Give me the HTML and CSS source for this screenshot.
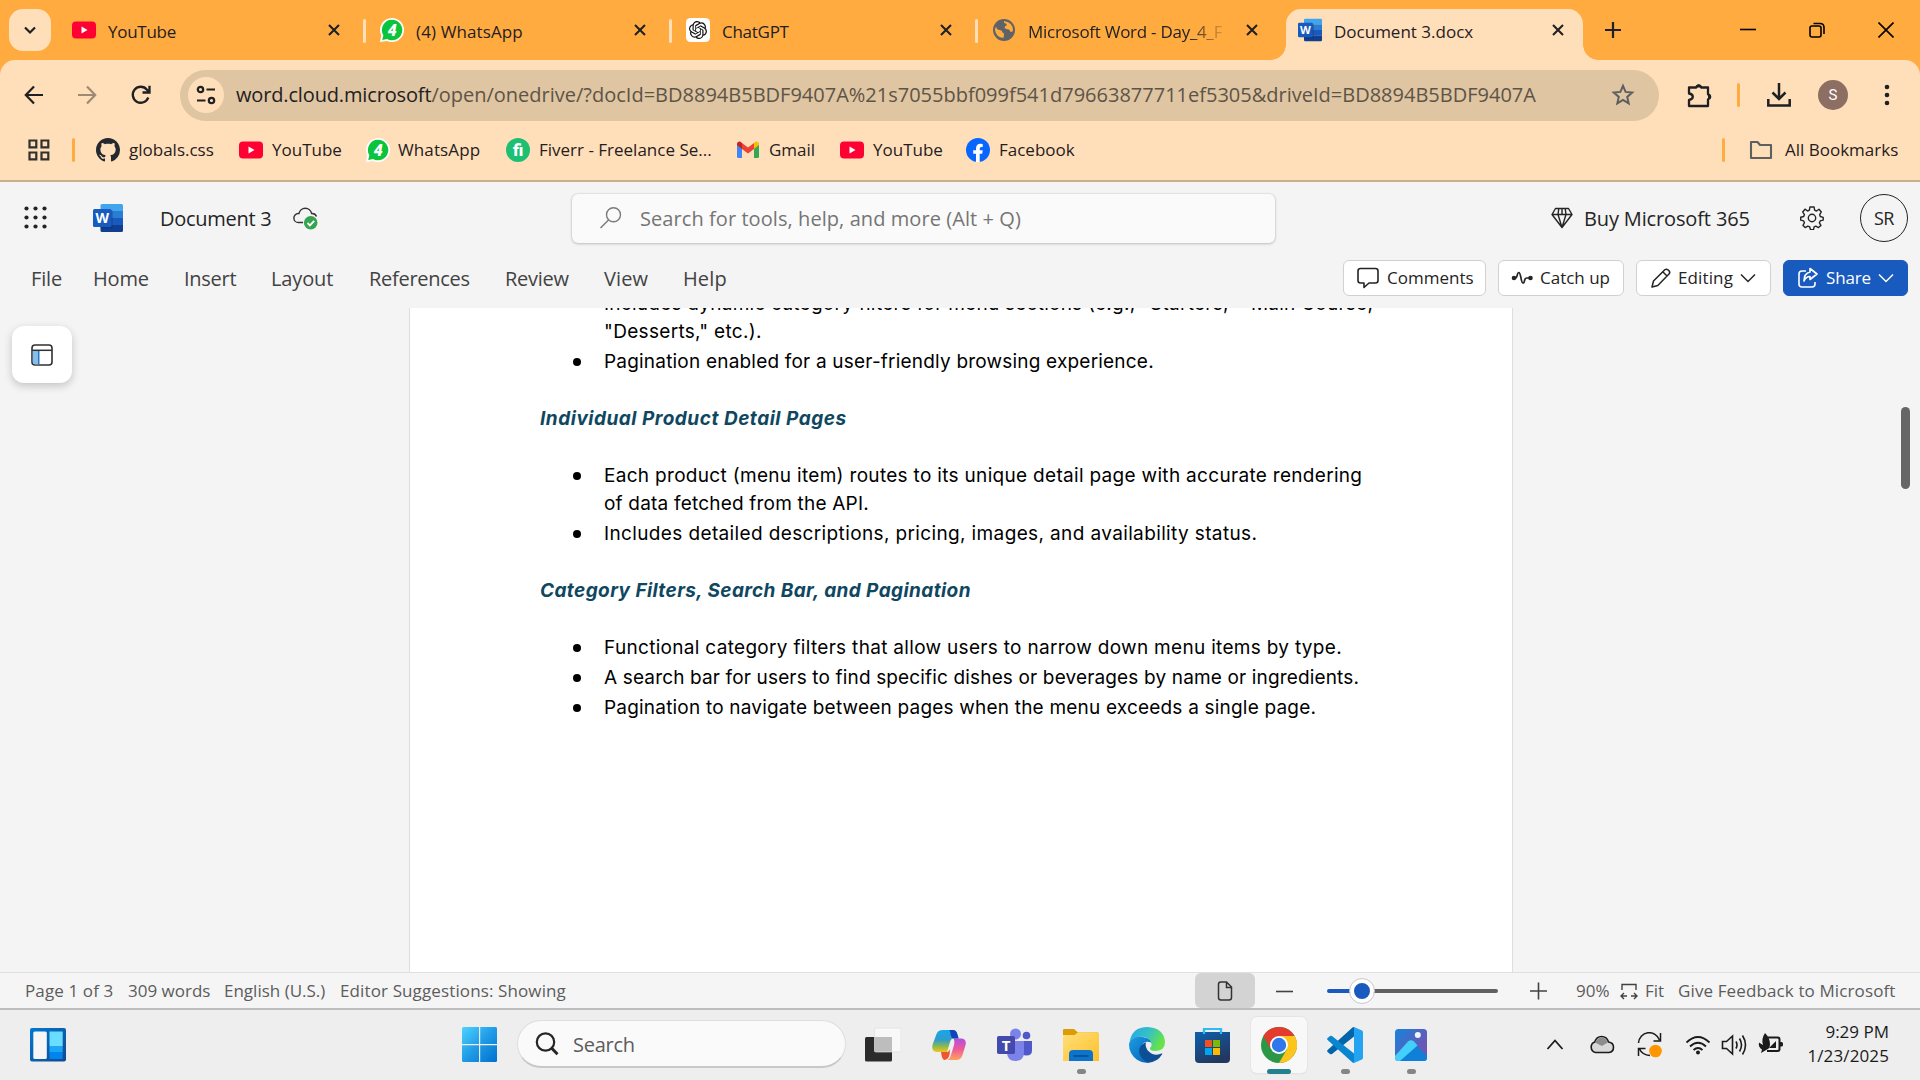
FILE: index.html
```html
<!DOCTYPE html>
<html lang="en">
<head>
<meta charset="utf-8">
<title>Document 3.docx</title>
<link rel="stylesheet" href="styles.css">
</head>
<body>
<svg class="defs" aria-hidden="true">
  <defs>
    <linearGradient id="g-win" x1="0" y1="0" x2="1" y2="1"><stop offset="0" stop-color="#4fd3ff"/><stop offset=".5" stop-color="#1f9be6"/><stop offset="1" stop-color="#0070d0"/></linearGradient>
    <symbol id="close" viewBox="0 0 14 14"><path d="M2 2l10 10M12 2L2 12" stroke="#1f2023" stroke-width="2.1" fill="none"/></symbol>
    <symbol id="youtube" viewBox="0 0 24 24"><rect y="3.6" width="24" height="17" rx="4" fill="#ff0033"/><path d="M9.5 8.4v7l6-3.5z" fill="#fff"/></symbol>
    <symbol id="whatsapp" viewBox="0 0 24 24"><path d="M12 0a12 12 0 0 1 0 24 12 12 0 0 1-5-1L0 24l1.300-6.500A12 12 0 0 1 12 0z" fill="#fff"/><path d="M12 1.800a10.200 10.200 0 1 1-4.900 19.100L2.200 22l1.200-4.700A10.200 10.200 0 0 1 12 1.800z" fill="#0ac43c"/><text x="12.300" y="17.800" text-anchor="middle" font-family="Roboto" font-weight="900" font-style="italic" font-size="16" fill="#fff">4</text></symbol>
    <symbol id="word" viewBox="0 0 30 28"><path d="M9 0h19.500Q30 0 30 1.500V7H7.500V1.500Q7.500 0 9 0z" fill="#41a5ee"/><path d="M7.500 7H30v7H7.500z" fill="#2b7cd3"/><path d="M7.500 14H30v7H7.500z" fill="#185abd"/><path d="M7.500 21H30v5.500q0 1.500-1.500 1.500H9q-1.500 0-1.500-1.500z" fill="#103f91"/><path d="M7.500 6H18q1.500 0 1.500 1.500V23q0 1.500-1.500 1.500H7.500z" fill="#0b2f6b" opacity=".45"/><rect y="5" width="18.500" height="18" rx="1.500" fill="#185abd"/><text x="9.200" y="19" text-anchor="middle" font-family="Open Sans" font-weight="700" font-size="14" fill="#fff">W</text></symbol>
    <symbol id="chev" viewBox="0 0 16 16"><path d="M1 4.500l7 7 7-7" fill="none" stroke="currentColor" stroke-width="1.500"/></symbol>
  </defs>
</svg>

<header class="tabstrip">
  <button class="tab-search"><svg width="14" height="14" viewBox="0 0 14 14"><path d="M2 4.500l5 5 5-5" fill="none" stroke="#1f2023" stroke-width="2.200"/></svg></button>
  <div class="tab first"><svg width="24" height="24"><use href="#youtube"/></svg><span class="t snug">YouTube</span><svg width="14" height="14"><use href="#close"/></svg></div>
  <div class="tab"><svg width="24" height="24"><use href="#whatsapp"/></svg><span class="t loose">(4) WhatsApp</span><svg width="14" height="14"><use href="#close"/></svg></div>
  <div class="tab"><svg width="24" height="24" viewBox="0 0 24 24"><rect width="24" height="24" rx="4.500" fill="#fff"/><path transform="translate(3 3) scale(.75)" fill="#111" d="M22.2819 9.8211a5.9847 5.9847 0 0 0-.5157-4.9108 6.0462 6.0462 0 0 0-6.5098-2.9A6.0651 6.0651 0 0 0 4.9807 4.1818a5.9847 5.9847 0 0 0-3.9977 2.9 6.0462 6.0462 0 0 0 .7427 7.0966 5.98 5.98 0 0 0 .511 4.9107 6.051 6.051 0 0 0 6.5146 2.9001A5.9847 5.9847 0 0 0 13.2599 24a6.0557 6.0557 0 0 0 5.7718-4.2058 5.9894 5.9894 0 0 0 3.9977-2.9001 6.0557 6.0557 0 0 0-.7475-7.0729zm-9.022 12.6081a4.4755 4.4755 0 0 1-2.8764-1.0408l.1419-.0804 4.7783-2.7582a.7948.7948 0 0 0 .3927-.6813v-6.7369l2.02 1.1686a.071.071 0 0 1 .038.052v5.5826a4.504 4.504 0 0 1-4.4945 4.4944zm-9.6607-4.1254a4.4708 4.4708 0 0 1-.5346-3.0137l.142.0852 4.783 2.7582a.7712.7712 0 0 0 .7806 0l5.8428-3.3685v2.3324a.0804.0804 0 0 1-.0332.0615L9.74 19.9502a4.4992 4.4992 0 0 1-6.1408-1.6464zM2.3408 7.8956a4.485 4.485 0 0 1 2.3655-1.9728V11.6a.7664.7664 0 0 0 .3879.6765l5.8144 3.3543-2.0201 1.1685a.0757.0757 0 0 1-.071 0l-4.8303-2.7865A4.504 4.504 0 0 1 2.3408 7.872zm16.5963 3.8558L13.1038 8.364 15.1192 7.2a.0757.0757 0 0 1 .071 0l4.8303 2.7913a4.4944 4.4944 0 0 1-.6765 8.1042v-5.6772a.79.79 0 0 0-.407-.667zm2.0107-3.0231l-.142-.0852-4.7735-2.7818a.7759.7759 0 0 0-.7854 0L9.409 9.2297V6.8974a.0662.0662 0 0 1 .0284-.0615l4.8303-2.7866a4.4992 4.4992 0 0 1 6.6802 4.66zM8.3065 12.863l-2.02-1.1638a.0804.0804 0 0 1-.038-.0567V6.0742a4.4992 4.4992 0 0 1 7.3757-3.4537l-.142.0805L8.704 5.459a.7948.7948 0 0 0-.3927.6813zm1.0976-2.3654l2.602-1.4998 2.6069 1.4998v2.9994l-2.5974 1.4997-2.6067-1.4997Z"/></svg><span class="t snug">ChatGPT</span><svg width="14" height="14"><use href="#close"/></svg></div>
  <div class="tab"><svg width="24" height="24" viewBox="0 0 24 24"><circle cx="12" cy="12" r="11" fill="#5f6368"/><path d="M4 8.500q.6 3.200 3.600 3.500 2.800.2 2.900 2.500 1.900.3 1.500 2.500L11.400 20Q4 19 3 12q0-2 1-3.500zM12 3q-.5 2 1.500 2.500 2 .6.700 2.200-2 .5-1.500 2.300 1.300 1.300 4 1.500 1.500.3 1.600 2.300 1.800.4 2.700-1Q21.500 4.500 12 3z" fill="#ffab40"/></svg><span class="t snug fade">Microsoft Word - Day_4_F</span><svg width="14" height="14"><use href="#close"/></svg></div>
  <div class="tab active"><svg width="24" height="24"><use href="#word"/></svg><span class="t">Document 3.docx</span><svg width="14" height="14"><use href="#close"/></svg></div>
  <div class="window-controls">
    <svg width="16" height="16" viewBox="0 0 16 16"><path d="M8 0v16M0 8h16" stroke="#1f2023" stroke-width="2.200"/></svg>
    <svg width="16" height="16" viewBox="0 0 16 16"><path d="M0 7.500h16" stroke="#000" stroke-width="1.600"/></svg>
    <svg width="16" height="16" viewBox="0 0 16 16" fill="none" stroke="#000" stroke-width="1.600"><rect x="1" y="4" width="11" height="11" rx="2"/><path d="M4.500 1.500H11q4 0 4 4V12"/></svg>
    <svg width="16" height="16" viewBox="0 0 16 16"><path d="M.5.500l15 15M15.500.500l-15 15" stroke="#000" stroke-width="1.600"/></svg>
  </div>
</header>

<div class="chrome">
  <div class="toolbar">
    <svg width="20" height="20" viewBox="0 0 20 20" fill="none" stroke="#1f2023" stroke-width="2.200"><path d="M10 1.500L1.800 10l8.200 8.500M2 10h17"/></svg>
    <svg width="20" height="20" viewBox="0 0 20 20" fill="none" stroke="#9d8a76" stroke-width="2.200"><path d="M10 1.500l8.200 8.500-8.200 8.500M18 10H1"/></svg>
    <svg width="20" height="20" viewBox="0 0 20 20" fill="none" stroke="#1f2023" stroke-width="2.300"><path d="M17.300 12.500A8 8 0 1 1 16 4.700L18 7M18.500.800V7.500H11.500"/></svg>
    <div class="omnibox">
      <span class="site-chip"><svg width="20" height="20" viewBox="0 0 20 20" fill="none" stroke="#1f2023" stroke-width="2.200"><circle cx="4.500" cy="4.500" r="2.700"/><path d="M10.500 4.500H19M1 15.500h8.500"/><circle cx="15.500" cy="15.500" r="2.700"/></svg></span>
      <span class="url"><b class="t">word.cloud.microsoft</b><i class="t">/open/onedrive/?docId=BD8894B5BDF9407A%21s7055bbf099f541d79663877711ef5305&amp;driveId=BD8894B5BDF9407A</i></span>
      <svg class="star" width="24" height="24" viewBox="0 0 24 24" fill="none" stroke="#5e5f61" stroke-width="2"><path d="M12 2.800l2.600 6.100 6.600.6-5 4.400 1.500 6.500L12 17l-5.700 3.400 1.500-6.500-5-4.400 6.600-.6z"/></svg>
    </div>
    <svg width="26" height="26" viewBox="0 0 26 26"><path d="M3 5.500h7.200a2.600 2.600 0 0 1 5 0H22v6.800a2.600 2.600 0 0 1 0 5V24H3v-6q3.800-.8 3.800-3.300T3 11.500z" fill="none" stroke="#1f2023" stroke-width="2.300" stroke-linejoin="round"/><path d="M10 5.500q0-3.300 2.700-3.300t2.700 3.300zM22 12q3.300.2 3.300 2.800T22 17.500z" fill="#1f2023"/></svg>
    <span class="bar"></span>
    <svg width="24" height="26" viewBox="0 0 24 26" fill="none" stroke="#1f2023" stroke-width="2.500"><path d="M12 1v15M5.500 10.500L12 17l6.500-6.500M1.300 17v6.500h21.400V17"/></svg>
    <span class="avatar">S</span>
    <svg width="6" height="22" viewBox="0 0 6 22" fill="#1f2023"><circle cx="3" cy="3" r="2.300"/><circle cx="3" cy="11" r="2.300"/><circle cx="3" cy="19" r="2.300"/></svg>
  </div>
  <nav class="bookmarks">
    <svg width="22" height="22" viewBox="0 0 22 22" fill="none" stroke="#30302f" stroke-width="2.200"><path d="M1.500 1.500h6.800v6.800H1.500zM13.500 1.500h6.800v6.800h-6.800zM1.500 13.500h6.800v6.800H1.500zM13.500 13.500h6.800v6.800h-6.800z"/></svg>
    <span class="bar"></span>
    <svg width="24" height="24" viewBox="0 0 16 16"><path fill="#24292f" d="M8 0C3.580 0 0 3.580 0 8c0 3.540 2.290 6.530 5.470 7.590.4.070.55-.17.55-.38 0-.19-.01-.82-.01-1.490-2.010.37-2.530-.49-2.690-.94-.09-.23-.48-.94-.82-1.130-.28-.15-.68-.52-.01-.53.63-.01 1.080.58 1.230.82.72 1.210 1.870.87 2.330.66.070-.52.28-.87.51-1.070-1.780-.2-3.640-.89-3.640-3.950 0-.87.31-1.590.82-2.150-.08-.2-.36-1.020.08-2.120 0 0 .67-.21 2.200.82.64-.18 1.320-.27 2-.27s1.360.09 2 .27c1.530-1.040 2.200-.82 2.200-.82.44 1.100.16 1.920.08 2.120.51.56.82 1.270.82 2.150 0 3.070-1.870 3.750-3.650 3.950.29.25.54.73.54 1.480 0 1.070-.01 1.930-.01 2.200 0 .21.15.46.55.38A8.010 8.010 0 0 0 16 8c0-4.420-3.580-8-8-8z"/></svg>
    <span class="t">globals.css</span>
    <svg width="24" height="24"><use href="#youtube"/></svg>
    <span class="t">YouTube</span>
    <svg width="24" height="24"><use href="#whatsapp"/></svg>
    <span class="t loose">WhatsApp</span>
    <svg width="24" height="24" viewBox="0 0 24 24"><circle cx="12" cy="12" r="12" fill="#1dbf73"/><text x="12" y="17.500" text-anchor="middle" font-family="Roboto" font-weight="900" font-size="16" fill="#fff">fi</text></svg>
    <span class="t">Fiverr - Freelance Se...</span>
    <svg width="22" height="22" viewBox="0 0 22 22"><path d="M0 5v12.500q0 1.500 1.500 1.500H5V9z" fill="#4285f4"/><path d="M17 9v10h3.500q1.500 0 1.500-1.500V5z" fill="#34a853"/><path d="M17 4v6l5-4V5q0-3-3-2.500z" fill="#fbbc04"/><path d="M0 5v1l5 4V4L3 2.500Q0 2 0 5z" fill="#c5221f"/><path d="M5 4l6 4.600L17 4v6l-6 4.600L5 10z" fill="#ea4335"/></svg>
    <span class="t">Gmail</span>
    <svg width="24" height="24"><use href="#youtube"/></svg>
    <span class="t">YouTube</span>
    <svg width="24" height="24" viewBox="0 0 24 24"><circle cx="12" cy="12" r="12" fill="#0866ff"/><path d="M10 24v-8.200H7.200v-3.600H10v-1.500q0-5 4.500-5 1.200 0 2.200.2v3.200h-1.300q-1.700 0-1.700 1.700v1.400h3l-.5 3.600h-2.500V24z" fill="#fff"/></svg>
    <span class="t">Facebook</span>
    <span class="bar"></span>
    <svg width="24" height="20" viewBox="0 0 24 20"><path d="M2 2h6.500l2.500 3h11v13H2z" fill="none" stroke="#5e5f61" stroke-width="2.100" stroke-linejoin="round"/></svg>
    <span class="t">All Bookmarks</span>
  </nav>
</div>

<section class="word-head">
  <div class="title-row">
    <svg width="24" height="24" viewBox="0 0 24 24" fill="#242424"><g id="dots"><circle cx="2.500" cy="2.500" r="2.100"/><circle cx="11.500" cy="2.500" r="2.100"/><circle cx="20.500" cy="2.500" r="2.100"/></g><use href="#dots" y="9"/><use href="#dots" y="18"/></svg>
    <svg width="30" height="28"><use href="#word"/></svg>
    <span class="t lg snug">Document 3</span>
    <svg width="26" height="26" viewBox="0 0 26 26"><path d="M10 17.500H5.500a4.500 4.500 0 0 1-.3-9H6a6.400 6.400 0 0 1 12.600 0 4.800 4.800 0 0 1 4.900 3" fill="none" stroke="#333" stroke-width="1.400"/><circle cx="17.700" cy="17.800" r="6.800" fill="#36a34f"/><path d="M14.500 18l2.400 2.400 4.300-4.600" fill="none" stroke="#fff" stroke-width="1.800"/></svg>
    <div class="search"><svg width="24" height="24" viewBox="0 0 24 24" fill="none" stroke="#7a7a7a" stroke-width="1.400"><circle cx="14.500" cy="8.800" r="7"/><path d="M9.500 14L1.500 22"/></svg><span class="t lg">Search for tools, help, and more (Alt + Q)</span></div>
    <svg width="22" height="22" viewBox="0 0 22 22" fill="none" stroke="#242424" stroke-width="1.400" stroke-linejoin="round"><path d="M4.500 1.500h13L21 7.500 11 20.500 1 7.500zM1 7.500h20M7.800 1.500L7 7.500l4 13 4-13-.8-6M11 1.500v6"/></svg>
    <span class="t lg trim">Buy Microsoft 365</span>
    <svg width="24" height="24" viewBox="0 0 24 24" fill="none" stroke="#242424" stroke-width="1.400" stroke-linejoin="round"><circle cx="12" cy="12" r="3.700"/><path d="M9.900 1h4.200l.5 3.200 1.900.8L19 3.200 21.300 6l-1.600 2.700.6 1.800 2.900.8v2.800l-3 .8-.8 1.900 1.500 2.600-2.400 2.200-2.700-1.500-1.700.7-.6 2.900h-3l-.8-2.900-1.900-.7-2.600 1.500-2.200-2.200 1.400-2.700-.7-1.800-3-.8v-2.800l3-.8.7-1.800L2.700 6 5 3.200 7.600 5l1.800-.8z"/></svg>
    <span class="sr">SR</span>
  </div>
  <div class="menu-row">
    <span class="t lg trim">File</span><span class="t lg trim">Home</span><span class="t lg snug">Insert</span><span class="t lg trim">Layout</span><span class="t lg snug">References</span><span class="t lg snug">Review</span><span class="t lg loose">View</span><span class="t lg loose">Help</span>
    <div class="actions">
      <button class="act comments"><svg width="24" height="24" viewBox="0 0 24 24" fill="none" stroke="#242424" stroke-width="1.600" stroke-linejoin="round"><path d="M4.500 2.500h15q2.500 0 2.500 2.500v9.500q0 2.500-2.500 2.500H13l-5 4.500V17H4.500Q2 17 2 14.500V5q0-2.500 2.500-2.500z"/></svg><span class="t">Comments</span></button>
      <button class="act catch"><svg width="22" height="22" viewBox="0 0 22 22"><path d="M3 11h1.500q1 0 1.500-2 .8-3.500 1.800-3.500t2 4.500q1 6 2.200 6t1.700-3q.6-2 2-2H19" fill="none" stroke="#242424" stroke-width="1.700"/><circle cx="3" cy="11" r="2.300" fill="#242424"/><circle cx="19.500" cy="11" r="2.300" fill="#242424"/></svg><span class="t">Catch up</span></button>
      <button class="act editing"><svg width="22" height="22" viewBox="0 0 22 22" fill="none" stroke="#242424" stroke-width="1.500" stroke-linejoin="round"><path d="M2 20l1.500-6L14.800 2.800q1.500-1.300 3.200 0l1 1q1.500 1.700 0 3.200L7.800 18.500zM13 5l4 4"/></svg><span class="t loose">Editing</span><svg width="16" height="16"><use href="#chev"/></svg></button>
      <button class="act share"><svg width="22" height="22" viewBox="0 0 22 22" fill="none" stroke="#fff" stroke-width="1.600" stroke-linejoin="round"><path d="M9 4H5Q2 4 2 7v10q0 3 3 3h10q3 0 3-3v-2"/><path d="M13 1.500l7 5.500-7 5.500V9.500q-4 0-6 4.500 0-7.500 6-9z"/></svg><span class="t trim">Share</span><svg width="16" height="16"><use href="#chev"/></svg></button>
    </div>
  </div>
</section>

<main class="canvas">
  <button class="nav-pane"><svg width="24" height="24" viewBox="0 0 24 24"><rect x="2" y="2" width="20" height="20" rx="3" fill="#fff" stroke="#303030" stroke-width="1.600"/><path d="M2.800 7.500h6v13.700H4.500q-1.700 0-1.700-1.700z" fill="#83beec"/><path d="M8.800 7.500V21" stroke="#0f6cbd" stroke-width="1.300"/><path d="M2 7.300h20" stroke="#303030" stroke-width="1.500"/></svg></button>
  <article class="page">
    <ul>
      <li><span class="t">Includes dynamic category filters for menu sections (e.g., "Starters," "Main Course,</span><br><span class="t wide">"Desserts," etc.).</span></li>
      <li><span class="t tight">Pagination enabled for a user-friendly browsing experience.</span></li>
    </ul>
    <h3><span class="t">Individual Product Detail Pages</span></h3>
    <ul>
      <li><span class="t wide">Each product (menu item) routes to its unique detail page with accurate rendering</span><br><span class="t tight">of data fetched from the API.</span></li>
      <li><span class="t wider">Includes detailed descriptions, pricing, images, and availability status.</span></li>
    </ul>
    <h3><span class="t narrower">Category Filters, Search Bar, and Pagination</span></h3>
    <ul>
      <li><span class="t wide">Functional category filters that allow users to narrow down menu items by type.</span></li>
      <li><span class="t tighter">A search bar for users to find specific dishes or beverages by name or ingredients.</span></li>
      <li><span class="t tight">Pagination to navigate between pages when the menu exceeds a single page.</span></li>
    </ul>
  </article>
  <div class="scroll"><span class="thumb"></span></div>
</main>

<footer class="status">
  <span class="t loose">Page 1 of 3</span><span class="t">309 words</span><span class="t">English (U.S.)</span><span class="t loose">Editor Suggestions: Showing</span>
  <span class="view-btn"><svg width="16" height="20" viewBox="0 0 16 20" fill="none" stroke="#333" stroke-width="1.500"><path d="M3.500 1H9.500l5 5v10.500q0 2.500-2.500 2.500H4q-2.500 0-2.500-2.500V3.500Q1.500 1 3.500 1zM9.500 1v5.500h5"/></svg></span>
  <svg width="18" height="18" viewBox="0 0 18 18"><path d="M0 9.500h17" stroke="#424242" stroke-width="1.600"/></svg>
  <div class="slider"><span class="knob"></span></div>
  <svg width="18" height="18" viewBox="0 0 18 18"><path d="M0 9h17M8.500 .5v17" stroke="#424242" stroke-width="1.600"/></svg>
  <span class="t">90%</span>
  <svg width="18" height="18" viewBox="0 0 18 18" fill="none" stroke="#424242" stroke-width="1.400"><path d="M2 8V2.500h14V8M7 14H1.500M4 11l-3 3 3 3M11 14h5.500M14 11l3 3-3 3"/></svg>
  <span class="t">Fit</span><span class="t loose">Give Feedback to Microsoft</span>
</footer>

<footer class="taskbar">
  <svg width="36" height="34" viewBox="0 0 36 34"><defs><linearGradient id="wg" x1="0" y1="0" x2="1" y2="1"><stop offset="0" stop-color="#0078d4"/><stop offset="1" stop-color="#144a8c"/></linearGradient></defs><rect width="36" height="33.500" rx="2" fill="url(#wg)"/><rect x="3.300" y="3.500" width="13.500" height="27.500" rx="1.500" fill="#f6f6f6"/><path d="M19.500 3.500h13.200v14.500H19.500z" fill="#69dcff"/><path d="M19.500 18h13.200v6H19.500z" fill="#1aa5f5"/><path d="M19.500 24h13.200v7H19.500z" fill="#0085ee"/></svg>
  <svg width="36" height="36" viewBox="0 0 36 36"><path fill="url(#g-win)" d="M1.500 0H17v17H0V1.500Q0 0 1.500 0zM18.200 0h15.500q1.300 0 1.300 1.500V17H18.200zM0 18.200h17V35H1.500Q0 35 0 33.500zM18.200 18.200H35v15.500Q35 35 33.500 35H18.200z"/></svg>
  <div class="tb-search"><svg width="24" height="24" viewBox="0 0 24 24" fill="none" stroke="#262626"><circle cx="10.500" cy="10" r="8.700" stroke-width="2.200"/><path d="M16.500 16l6 6.200" stroke-width="3"/></svg><span class="t lg snug">Search</span></div>
  <svg width="36" height="36" viewBox="0 0 36 36"><rect y="10" width="27" height="24.500" rx="1.500" fill="#2b2b2b"/><rect x="9.500" y="1" width="26.500" height="24" rx="1.500" fill="#f8f8f8" stroke="#ddd" stroke-width=".7"/><path d="M9.500 10H27v14.700H9.500z" fill="#bdbdbd"/></svg>
  <svg width="34" height="32" viewBox="0 0 34 32"><defs><linearGradient id="c1" x1="0" y1="0" x2="0" y2="1"><stop offset="0" stop-color="#17a7ee"/><stop offset=".45" stop-color="#2f9ccb"/><stop offset=".75" stop-color="#8dbb4a"/><stop offset="1" stop-color="#f4c51e"/></linearGradient><linearGradient id="c2" x1="0" y1="0" x2="0" y2="1"><stop offset="0" stop-color="#b14fe0"/><stop offset=".5" stop-color="#ee5a9a"/><stop offset="1" stop-color="#ffa35a"/></linearGradient></defs><path d="M13 1h8q3.200 0 4.300 4l1.300 4.500h-5q-2.600 0-3.400 3L15 23H4.500Q-1 22 .6 15.500L4.500 5Q6 1 11 1z" fill="url(#c1)"/><path d="M17 1h4q3.200 0 4.300 4l1.300 4.500h-5Q19 9 18.500 5T17 1z" fill="#1443b8"/><path d="M21.500 9.500H29q5.500 0 4.700 6L30.500 26q-1.500 5-6 5h-9q2.500-1 3.500-5l3-10q.9-4-.5-6.500z" fill="url(#c2)"/><path d="M9 23h6.500q1.500 0 2.500-3 0 11-5.500 11Q10 31 9 23z" fill="#ee5630"/></svg>
  <svg width="36" height="34" viewBox="0 0 36 34"><circle cx="29.500" cy="7.500" r="3.800" fill="#5059c9"/><path d="M24 13h11v9.500q0 5-5.500 5T24 23z" fill="#5059c9"/><circle cx="18.500" cy="6" r="5.500" fill="#7b83eb"/><path d="M10 13h17v11q0 9-8.500 9T10 24z" fill="#7b83eb"/><rect y="8" width="18" height="18" rx="1.800" fill="#4349ad"/><text x="9" y="22.500" text-anchor="middle" font-family="Open Sans" font-weight="700" font-size="15" fill="#fff">T</text></svg>
  <div class="app"><svg width="36" height="34" viewBox="0 0 36 34"><defs><linearGradient id="f1" x1="0" y1="0" x2="1" y2="1"><stop offset="0" stop-color="#ffdf7a"/><stop offset="1" stop-color="#ffc02a"/></linearGradient></defs><path d="M0 2Q0 1 1 1h10l4 3.500h20V10H0z" fill="#dd9b04"/><path d="M0 7h11.500L15 4.500h20q1 0 1 1V33H0z" fill="url(#f1)"/><path d="M6 33v-7q0-4 4-4h16q4 0 4 4v7z" fill="#0d74cc"/><path d="M10.500 28h15" stroke="#064a88" stroke-width="1.500"/></svg><i class="dot"></i></div>
  <svg width="36" height="36" viewBox="0 0 36 36"><defs><linearGradient id="e1" x1="0" y1="0" x2="1" y2=".4"><stop offset="0" stop-color="#25a5ec"/><stop offset=".55" stop-color="#35c1c4"/><stop offset="1" stop-color="#66e347"/></linearGradient><linearGradient id="e2" x1="0" y1="0" x2="1" y2="1"><stop offset="0" stop-color="#1b9de2"/><stop offset="1" stop-color="#0660b8"/></linearGradient></defs><path d="M.5 15Q3 0 18.500 0 35 1 36 15q0 8.500-9.500 9-6 0-5.500-3 2.500-2.500 1-5.500Q19 9 10 10 3.500 11 .5 15z" fill="url(#e1)"/><path d="M.2 16Q3 10 11 9.800q9 .2 11.300 5.700Q14 13 12.500 20q-.5 9.500 9 15-7 2-13.500-2.300Q-1 26 .2 16z" fill="url(#e2)"/><path d="M17 15q-6.500 3-7 9 .5 7 8.500 11.700Q28 36 33.500 26.800q-.5-.8-1.800 0-7.200 3-13-3.300-3-4-1.700-8.500z" fill="#0c4f94"/></svg>
  <svg width="36" height="36" viewBox="0 0 36 36"><defs><linearGradient id="s1" x1="0" y1="0" x2=".5" y2="1"><stop offset="0" stop-color="#0c60b0"/><stop offset="1" stop-color="#22385f"/></linearGradient></defs><path d="M9 8V2h17v6" fill="none" stroke="#2bbcf6" stroke-width="2.200"/><path d="M0 5h35v27q0 4-4 4H4q-4 0-4-4z" fill="url(#s1)"/><path d="M9 7V2M26 7V2" stroke="#2bbcf6" stroke-width="2.200"/><path d="M10 13h7v7h-7z" fill="#f25022"/><path d="M18 13h7v7h-7z" fill="#7fba00"/><path d="M10 21h7v7h-7z" fill="#00a4ef"/><path d="M18 21h7v7h-7z" fill="#ffb900"/></svg>
  <div class="app current"><svg width="36" height="36" viewBox="0 0 36 36"><circle cx="18" cy="18" r="18" fill="#2c9847"/><path d="M2.400 9A18 18 0 0 1 33.600 9H18L10.200 22.500z" fill="#e33b2e"/><path d="M33.600 9A18 18 0 0 1 18 36l7.800-13.500Q29 14 18 9z" fill="#fdc51c"/><circle cx="18" cy="18" r="9" fill="#fff"/><circle cx="18" cy="18" r="7.200" fill="#2f78ec"/></svg><i class="dot"></i></div>
  <div class="app"><svg width="36" height="36" viewBox="0 0 36 36"><path d="M27 0l8 3.500q1 .5 1 2v25q0 1.500-1 2L27 36z" fill="#24a3f2"/><path d="M27 0v9.500L5 27q-1 .7-2 0L.6 25q-1-1 0-2L25.500.600z" fill="#0065a9"/><path d="M27 36v-9.500L5 9Q4 8.300 3 9L.6 11q-1 1 0 2l24.900 22.400z" fill="#0a86d1"/></svg><i class="dot"></i></div>
  <div class="app"><svg width="32" height="32" viewBox="0 0 32 32"><defs><linearGradient id="p1" x1="0" y1="0" x2="1" y2=".8"><stop offset="0" stop-color="#1484dc"/><stop offset=".8" stop-color="#6a57b5"/></linearGradient><clipPath id="pc"><rect width="32" height="32" rx="3.500"/></clipPath></defs><g clip-path="url(#pc)"><path d="M0 0h32v32H0z" fill="url(#p1)"/><path d="M4 32L19 18q2-1.800 4 0l9 9v5z" fill="#0f7fd8"/><path d="M0 27l13-14.500q3-2.500 6 0l3.500 4L5 32H0z" fill="#42d0fb"/><circle cx="22.800" cy="6" r="3" fill="#f3f3fb"/></g></svg><i class="dot"></i></div>
  <svg width="18" height="18" viewBox="0 0 18 18"><path d="M1.500 13L9 4.500l7.500 8.500" fill="none" stroke="#1b1b1b" stroke-width="1.800"/></svg>
  <svg width="26" height="20" viewBox="0 0 26 20"><path d="M6.500 17.500a5.500 5.500 0 0 1-.8-10.500Q7.500 1.500 12.500 1.500q5.500 0 7 5.500 5 .6 5 5.300t-4.500 5.200z" fill="#d8d8d8" stroke="#1b1b1b" stroke-width="1.600"/><path d="M6 7.500Q9 2.500 13 2.500q4 .5 5.700 5L13 11z" fill="#8c8c8c"/></svg>
  <svg width="28" height="26" viewBox="0 0 28 26" fill="none" stroke="#1b1b1b" stroke-width="1.500"><path d="M1.500 11A10.800 10.800 0 0 1 22.500 8M23.500 1v8h-7M13 23.500Q5 23 2 16M1.500 24v-7.500h7"/><circle cx="18.500" cy="19" r="6.300" fill="#ff9500" stroke="none"/></svg>
  <svg width="26" height="24" viewBox="0 0 26 24" fill="none" stroke="#1b1b1b" stroke-width="1.800"><path d="M1.500 9.500q11.500-11 23 0M5 13.500q8-7.500 16 0M8.500 17q4.500-4 9 0"/><circle cx="13" cy="19.500" r="2" fill="#1b1b1b" stroke="none"/></svg>
  <svg width="26" height="24" viewBox="0 0 26 24" fill="none" stroke="#1b1b1b" stroke-width="1.600"><path d="M1.500 8.500H5.500L11.500 3v18L5.500 15.500h-4zM15 8.500q2 3.500 0 7M18.500 5.500q4 6.500 0 13M21.500 2.500q6 9.500 0 19"/></svg>
  <svg width="26" height="24" viewBox="0 0 26 24"><path d="M10 4.500h9.500q2 0 2 2v9.500q0 2-2 2H9" fill="none" stroke="#1b1b1b" stroke-width="2"/><path d="M22 9h1.500q1.500 0 1.500 1.500v1.500q0 1.500-1.500 1.500H22z" fill="#1b1b1b"/><path d="M18 8v7H11z" fill="#1b1b1b"/><path d="M7 0q5 5 5 11 0 4.500-3 5.500L3 20l1-3.500Q0 14 1 9.500L5 12Q3 6 7 0z" fill="#1b1b1b"/></svg>
  <div class="clock"><span class="t">9:29 PM</span><span class="t loose">1/23/2025</span></div>
</footer>
</body>
</html>
```
FILE: styles.css
```css
* { box-sizing: border-box; }
body {
  margin: 0;
  width: 1920px;
  height: 1080px;
  overflow: hidden;
  display: grid;
  grid-template-rows: 60px 122px 126px 664px 38px 70px;
  font-family: "Open Sans", "Noto Sans", sans-serif;
  font-size: 17px;
  line-height: 24px;
  color: #1f2023;
  background: #f4f4f4;
}
.defs { position: absolute; width: 0; height: 0; }
svg { display: block; flex: none; }
button { font: inherit; color: inherit; border: 0; padding: 0; }
.t { white-space: nowrap; font-weight: 400; font-style: normal; }
.lg { font-size: 20px; }
.snug { letter-spacing: -.27px; }
.trim { letter-spacing: -.14px; }
.loose { letter-spacing: .12px; }

/* tab strip */
.tabstrip { display: flex; background: #ffab40; height: 60px; }
.tab-search {
  width: 42px; height: 42px; margin: 9px 6px 0 9px;
  border-radius: 14px; background: #ffdfb9;
  display: grid; place-items: center;
}
.tab {
  position: relative; width: 306px; height: 60px; padding-left: 17px;
  display: grid; grid-template-columns: 36px 217px 14px; align-items: center;
}
.tab > * { position: relative; }
.tab .t { padding-top: 3px; }
.tab.first { padding-left: 15px; grid-template-columns: 36px 219px 14px; }
.tab:not(.first):not(.active)::before {
  content: ""; position: absolute; left: 0; top: 19px;
  width: 3px; height: 24px; border-radius: 2px; background: #ffdfb9;
}
.tab .fade {
  width: 200px;
  mask-image: linear-gradient(90deg, #000 160px, transparent 200px);
}
.tab.active::before {
  content: ""; position: absolute; left: 5px; right: 4px; top: 9px; bottom: 0;
  background: #ffdfb9; border-radius: 15px 15px 0 0;
}
.tab.active::after {
  content: ""; position: absolute; left: -10px; right: -11px; bottom: 0; height: 15px;
  background:
    radial-gradient(circle at 0 0, transparent 14.5px, #ffdfb9 15px) left / 15px 15px no-repeat,
    radial-gradient(circle at 100% 0, transparent 14.5px, #ffdfb9 15px) right / 15px 15px no-repeat;
}
.window-controls {
  display: grid; grid-template-columns: 135px 69px 69px 16px;
  align-items: center; padding-left: 18px;
}

/* toolbar and bookmarks */
.chrome { border-bottom: 2px solid #c9b08e; background: linear-gradient(#ffab40 20px, #ffdfb9 20px); }
.toolbar {
  height: 70px; padding-left: 24px; border-radius: 15px 15px 0 0; background: #ffdfb9;
  display: grid; align-items: center;
  grid-template-columns: 53px 54px 49px 1506px 51px 30px 51px 66px 6px;
}
.omnibox {
  width: 1479px; height: 51px; padding-left: 8px; border-radius: 26px; background: #dfc5a1;
  display: grid; grid-template-columns: 48px 1375px 24px; align-items: center;
}
.site-chip {
  width: 36px; height: 36px; border-radius: 50%; background: #ffdfb9;
  display: grid; place-items: center;
}
.url { font-size: 20px; white-space: nowrap; }
.url b { letter-spacing: -.15px; }
.url i { color: #5d5448; }
.bar { width: 3px; height: 24px; border-radius: 2px; background: #ffab40; }
.avatar {
  width: 30px; height: 30px; border-radius: 50%; background: #8d6e63; color: #fff;
  font: 15px/30px Roboto, sans-serif; text-align: center;
}
.bookmarks {
  height: 40px; padding: 0 0 0 28px; background: #ffdfb9;
  display: grid; align-items: center;
  grid-template-columns: 44px 24px 33px 110px 33px 94px 32px 108px 33px 198px 32px 71px 33px 93px 33px 723px 27px 36px 120px;
}

/* word header */
.word-head { background: #f4f4f4; color: #242424; }
.title-row {
  height: 72px; padding-left: 24px;
  display: grid; align-items: center;
  grid-template-columns: 69px 67px 133px 279px 979px 33px 216px 60px 48px;
}
.title-row .t { padding-top: 2px; }
.search {
  width: 703px; height: 49px; padding-left: 27px; border-radius: 6px; background: #fafafa;
  box-shadow: 0 0 2px rgba(0,0,0,.18), 0 1px 3px rgba(0,0,0,.18); color: #757575;
  display: grid; grid-template-columns: 41px 1fr; align-items: center;
}
.search .t { letter-spacing: .07px; }
.sr {
  width: 48px; height: 48px; border: 1px solid #242424; border-radius: 50%;
  line-height: 47px; text-align: center; font-size: 18px; letter-spacing: -.5px;
}
.menu-row {
  height: 54px; padding: 0 0 6px 31px; color: #424242;
  display: grid; align-items: center;
  grid-template-columns: 62px 91px 87px 98px 136px 99px 79px 660px 565px;
}
.menu-row > .t { padding-top: 1px; }
.actions { display: flex; gap: 12px; color: #242424; }
.act {
  height: 36px; border-radius: 6px; border: 1px solid #d1d1d1; background: #fff;
  display: flex; align-items: center;
}
.comments { width: 143px; padding-left: 12px; gap: 7px; }
.catch { width: 126px; padding-left: 12px; gap: 7px; }
.editing { width: 135px; padding-left: 13px; }
.editing .t { width: 62px; margin-left: 6px; text-align: left; }
.share { width: 125px; padding-left: 13px; background: #185abd; border-color: #185abd; color: #fff; }
.share .t { width: 52px; margin-left: 7px; text-align: left; }

/* document */
.canvas { display: grid; grid-template-columns: 410px 1102px 1fr; overflow: hidden; }
.nav-pane {
  width: 60px; height: 57px; margin: 18px 0 0 12px; border-radius: 12px; background: #fff;
  box-shadow: 0 3px 8px rgba(0,0,0,.2); display: grid; place-items: center;
}
.page {
  background: #fff; outline: 1px solid #dedede; padding-left: 130px;
  font: 19px/28px Inter, sans-serif; letter-spacing: .25px;
  color: #000; height: 664px; overflow: hidden;
}
.page .wider { letter-spacing: .37px; }
.page .wide { letter-spacing: .31px; }
.page .tight { letter-spacing: .2px; }
.page .tighter { letter-spacing: .15px; }
.page ul { list-style: none; margin: -18px 0 0; padding: 0 0 0 64px; }
.page h3 {
  margin: 27px 0 29px; font-size: 19px; line-height: 29px; font-weight: 700;
  letter-spacing: .52px; color: #0f4761;
}
.page h3 .t { font-weight: 700; font-style: italic; }
.page h3 .narrower { letter-spacing: .41px; }
.page h3 + ul { margin-top: 0; }
.page li { position: relative; padding-bottom: 1.6px; }
.page li::before {
  content: ""; position: absolute; left: -31px; top: 10px;
  width: 8px; height: 8px; border-radius: 50%; background: #000;
}
.scroll { display: flex; justify-content: flex-end; padding: 99px 10px 0 0; }
.thumb { width: 9px; height: 82px; border-radius: 5px; background: #666; }

/* status bar */
.status {
  border-top: 1px solid #e0e0e0; border-bottom: 2px solid #bdbdbd; background: #f5f5f5;
  padding-left: 25px; color: #5c5c5c;
  display: grid; align-items: center;
  grid-template-columns: 103px 96px 116px 855px 81px 51px 203px 46px 44px 25px 33px 217px;
}
.status .t { padding-top: 1px; }
.view-btn {
  width: 60px; height: 35px; border-radius: 6px; background: #d3d3d3;
  display: grid; place-items: center;
}
.slider {
  position: relative; width: 171px; height: 4px; border-radius: 2px;
  background: linear-gradient(90deg, #185abd 35px, #616161 35px);
}
.knob {
  position: absolute; left: 23px; top: -10px; width: 24px; height: 24px; border-radius: 50%;
  background: #185abd; border: 4px solid #fff; outline: 1px solid #c8c8d0;
}

/* taskbar */
.taskbar {
  background: #eee; padding-left: 30px;
  display: grid; align-items: center;
  grid-template-columns: 432px 55px 348px 67px 65px 56px 76px 66px 56px 66px 66px 163px 43px 48px 48px 36px 37px 49px 82px;
}
.tb-search {
  width: 329px; height: 48px; padding-left: 17px; border-radius: 24px; background: #fafafa;
  border: 1px solid #dedede; border-bottom: 2px solid #c8c8c8; color: #5c5c5c;
  display: grid; grid-template-columns: 38px 1fr; align-items: center;
  margin-top: -2px;
}
.tb-search .t { padding-top: 2px; }
.app {
  position: relative; width: 56px; height: 56px; border-radius: 6px;
  display: grid; place-items: center;
}
.current { background: #f8f8f8; box-shadow: 0 0 0 1px #e5e5e5, 0 1px 1px #ccc; }
.dot {
  position: absolute; bottom: -1px; left: 23.5px; width: 9px; height: 5px;
  border-radius: 3px; background: #858585;
}
.current .dot { width: 24px; left: 16px; background: #24808f; }
.clock { display: grid; justify-items: end; line-height: 24px; color: #1b1b1b; margin-top: -3px; }
```
